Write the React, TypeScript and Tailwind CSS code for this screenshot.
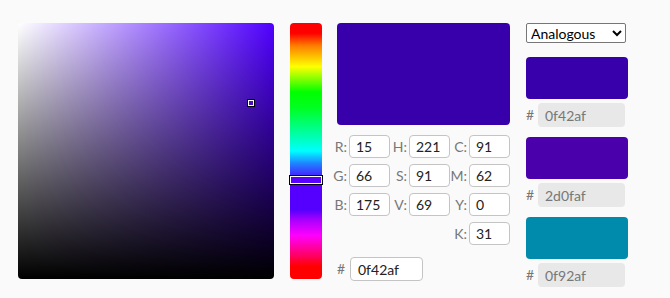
import { ChangeEvent } from "react";

const rows: [string, string][][] = [
  [["R:", "15"], ["H:", "221"], ["C:", "91"]],
  [["G:", "66"], ["S:", "91"], ["M:", "62"]],
  [["B:", "175"], ["V:", "69"], ["Y:", "0"]],
  [["", ""], ["", ""], ["K:", "31"]],
];

const swatches = [
  { color: "bg-[#3700ab]", hex: "0f42af" },
  { color: "bg-[#4a00ab]", hex: "2d0faf" },
  { color: "bg-[#008aab]", hex: "0f92af" },
];

function Field({ label, value }: { label: string; value: string }) {
  if (!label) return <div className="w-[60px]" />;
  return (
    <div className="flex items-center w-[60px]">
      <span className="w-[19px] pr-[2px] text-right text-[#777] text-[14px] leading-none">{label}</span>
      <input
        readOnly
        value={value}
        className="w-[41px] h-[23px] rounded-[4px] border border-[#c4c4c4] bg-white pl-[6px] text-[14px] text-[#222] outline-none"
      />
    </div>
  );
}

export default function App() {
  const noop = (_e: ChangeEvent<HTMLSelectElement>) => {};
  return (
    <div className="w-[670px] h-[298px] bg-[#fafafa] pt-[23px] pl-[18px] flex font-['Lato',sans-serif]">
      {/* saturation / value square */}
      <div className="relative w-[256px] h-[256px] rounded-[4px] bg-[linear-gradient(to_top,#000,transparent),linear-gradient(to_right,#fff,#5000ff)]">
        <div className="absolute left-[229px] top-[76px] w-[8px] h-[8px] border border-black bg-white p-[1px]">
          <div className="w-full h-full bg-[#4a10c8]" />
        </div>
      </div>

      {/* hue bar */}
      <div className="relative ml-[16px] w-[32px] h-[256px] rounded-[4px] bg-[linear-gradient(to_bottom,#ff0000_0%,#ff0000_4%,#ff8000_9%,#ffff00_17%,#80ff00_22%,#00ff00_27%,#00ff20_33%,#00ff9f_43%,#00ffff_50%,#2080ff_55%,#4030ff_59%,#5500ff_63%,#5500ff_73%,#aa00ff_77%,#ff00ff_83%,#ff0060_91%,#ff0000_95%,#ff0000_100%)]">
        <div className="absolute left-[-1px] top-[152px] w-[34px] h-[10px] border border-black bg-white p-[1px]">
          <div className="w-full h-full bg-[#5a00ff]" />
        </div>
      </div>

      {/* preview + values */}
      <div className="ml-[15px] w-[173px] flex flex-col">
        <div className="h-[102px] rounded-[4px] bg-[#3700ab]" />
        <div className="ml-[-7px] mt-[10px] flex flex-col gap-[6px]">
          {rows.map((row, i) => (
            <div key={i} className="flex">
              {row.map(([l, v], j) => (
                <Field key={j} label={l} value={v} />
              ))}
            </div>
          ))}
        </div>
        <div className="mt-[12px] flex items-center">
          <span className="w-[13px] text-[#777] text-[14px] leading-none">#</span>
          <input
            readOnly
            value="0f42af"
            className="w-[73px] h-[24px] rounded-[4px] border border-[#c4c4c4] bg-white pl-[7px] text-[14px] text-[#222] outline-none"
          />
        </div>
      </div>

      {/* scheme */}
      <div className="ml-[16px] w-[102px] flex flex-col">
        <select
          value="analogous"
          onChange={noop}
          className="w-[100px] h-[20px] border border-[#767676] rounded-[2px] bg-white text-[14px] text-black leading-none"
        >
          <option value="analogous">Analogous</option>
          <option value="complementary">Complementary</option>
          <option value="triadic">Triadic</option>
        </select>
        <div className="mt-[14px] flex flex-col gap-[10px]">
          {swatches.map((s) => (
            <div key={s.hex} className="flex flex-col gap-[4px]">
              <div className={`h-[42px] rounded-[4px] ${s.color}`} />
              <div className="flex items-center">
                <span className="w-[12px] text-[#777] text-[14px] leading-none">#</span>
                <div className="w-[87px] h-[24px] rounded-[4px] bg-[#e8e8e8] pl-[7px] flex items-center text-[14px] text-[#777]">
                  {s.hex}
                </div>
              </div>
            </div>
          ))}
        </div>
      </div>
    </div>
  );
}
